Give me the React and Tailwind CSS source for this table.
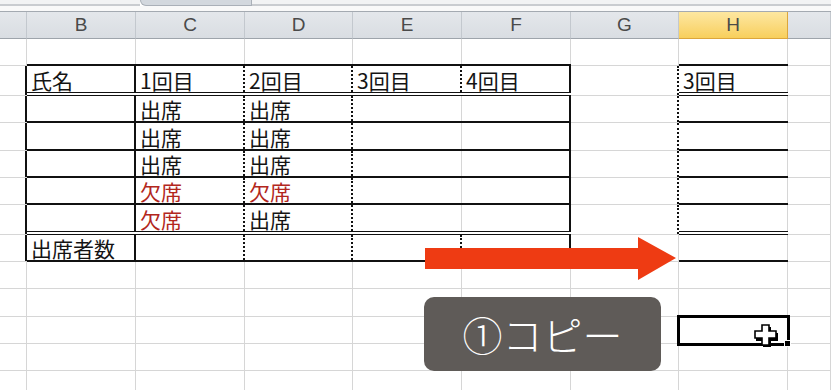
import React from 'react'

const widths = ['w-[27px]', 'w-[109px]', 'w-[109px]', 'w-[108px]', 'w-[109px]', 'w-[109px]', 'w-[108px]', 'w-[109px]', 'w-[43px]']
const letters = ['', 'B', 'C', 'D', 'E', 'F', 'G', 'H', '']

const rightCls = {
  g: 'border-r border-[#d6d6d6]',
  k: 'border-r-2 border-[#111]',
  d: 'border-r-2 border-dotted border-[#111]',
}
const bottomCls = {
  g: 'border-b border-[#d6d6d6]',
  k: 'border-b-2 border-[#111]',
  w: 'border-b-4 border-double border-[#111]',
}

const R = (h, rights, bottoms, texts = []) => ({ h, rights, bottoms, texts })
const body = 'kkddgkdgg'
const line = 'gkkkkkgkg'
const dbl = 'gwwwwwgwg'

const rows = [
  R('h-[27px]', 'ggggggggg', line),
  R('h-[30px]', 'kkdddkdgg', dbl, ['', '氏名', '1回目', '2回目', '3回目', '4回目', '', '3回目', '']),
  R('h-[27px]', body, line, ['', '', '出席', '出席']),
  R('h-[28px]', body, line, ['', '', '出席', '出席']),
  R('h-[27px]', body, line, ['', '', '出席', '出席']),
  R('h-[27px]', body, line, ['', '', '*欠席', '*欠席']),
  R('h-[30px]', body, dbl, ['', '', '*欠席', '出席']),
  R('h-[27px]', 'kkdddkggg', line, ['', '出席者数']),
  R('h-[27px]', 'ggggggggg', 'ggggggggg'),
  R('h-[28px]', 'ggggggggg', 'ggggggggg'),
  R('h-[27px]', 'ggggggggg', 'ggggggggg'),
  R('h-[27px]', 'ggggggggg', 'ggggggggg'),
  R('h-[27px]', 'ggggggggg', 'ggggggggg'),
]

function Cell({ w, h, r, b, text }) {
  const red = text && text.startsWith('*')
  const label = red ? text.slice(1) : text
  return (
    <div className={`${w} ${h} shrink-0 flex flex-col box-border ${bottomCls[b]}`}>
      <div className={`flex-1 flex items-end pl-[4px] pb-[1px] box-border whitespace-nowrap text-[21px] leading-[22px] ${rightCls[r]} ${red ? 'text-[#b3271d]' : 'text-[#141414]'}`}>
        {label}
      </div>
    </div>
  )
}

export default function App() {
  return (
    <div className="relative w-[831px] h-[390px] overflow-hidden bg-white font-['Noto_Sans_CJK_JP','Noto_Sans',sans-serif]">
      {/* ribbon edge / sheet tab */}
      <div className="flex h-[6px]">
        <div className="w-[140px] bg-[#f2f3f4] border-b-2 border-[#c9ccd0]" />
        <div className="w-[112px] bg-[#d3d8de] border-x border-b border-[#aab0b8] rounded-bl-[6px]" />
        <div className="flex-1 bg-[#f2f3f4] border-b-2 border-[#c9ccd0]" />
      </div>
      <div className="h-[6px] bg-[#f9f9f9] border-b border-[#a4aab1]" />

      {/* column headers */}
      <div className="flex h-[27px]">
        {letters.map((l, i) => (
          <div
            key={i}
            className={`${widths[i]} shrink-0 flex items-center justify-center box-border border-r border-b text-[19px] text-[#4a4a4a] font-['Liberation_Sans',sans-serif] ${
              l === 'H'
                ? 'bg-gradient-to-b from-[#fde7a0] to-[#f8cf5b] border-[#dca63b]'
                : 'bg-gradient-to-b from-[#e4e7eb] to-[#d9dde2] border-[#c3c8ce] border-b-[#9ea4ab]'
            }`}
          >
            {l}
          </div>
        ))}
      </div>

      {/* grid */}
      <div className="flex flex-col">
        {rows.map((row, ri) => (
          <div key={ri} className="flex">
            {widths.map((w, ci) => (
              <Cell key={ci} w={w} h={row.h} r={row.rights[ci]} b={row.bottoms[ci]} text={row.texts[ci]} />
            ))}
          </div>
        ))}
      </div>

      {/* arrow */}
      <svg className="absolute left-[425px] top-[237px]" width="252" height="44" viewBox="0 0 252 44">
        <polygon points="0,11 213,11 213,0 251,21 213,43 213,32 0,32" fill="#ee3b13" />
      </svg>

      {/* caption */}
      <div className="absolute left-[424px] top-[297px] w-[237px] h-[74px] rounded-[10px] bg-[#5f5b58] flex items-center justify-center text-white text-[40px] leading-[48px] font-light">
        ①コピー
      </div>

      {/* active cell */}
      <div className="absolute left-[677px] top-[315px] w-[113px] h-[31px] border-[3px] border-black" />
      <div className="absolute left-[784px] top-[340px] w-[7px] h-[7px] bg-black border border-white" />
      <svg className="absolute left-[754px] top-[324px]" width="26" height="24" viewBox="0 0 26 24">
        <polygon points="9,3 17,3 17,9 24,9 24,17 17,17 17,23 9,23 9,17 2,17 2,9 9,9" fill="#000" />
        <polygon points="8,1 15,1 15,7 22,7 22,14 15,14 15,21 8,21 8,14 1,14 1,7 8,7" fill="#fff" stroke="#000" strokeWidth="1.6" />
      </svg>
    </div>
  )
}
